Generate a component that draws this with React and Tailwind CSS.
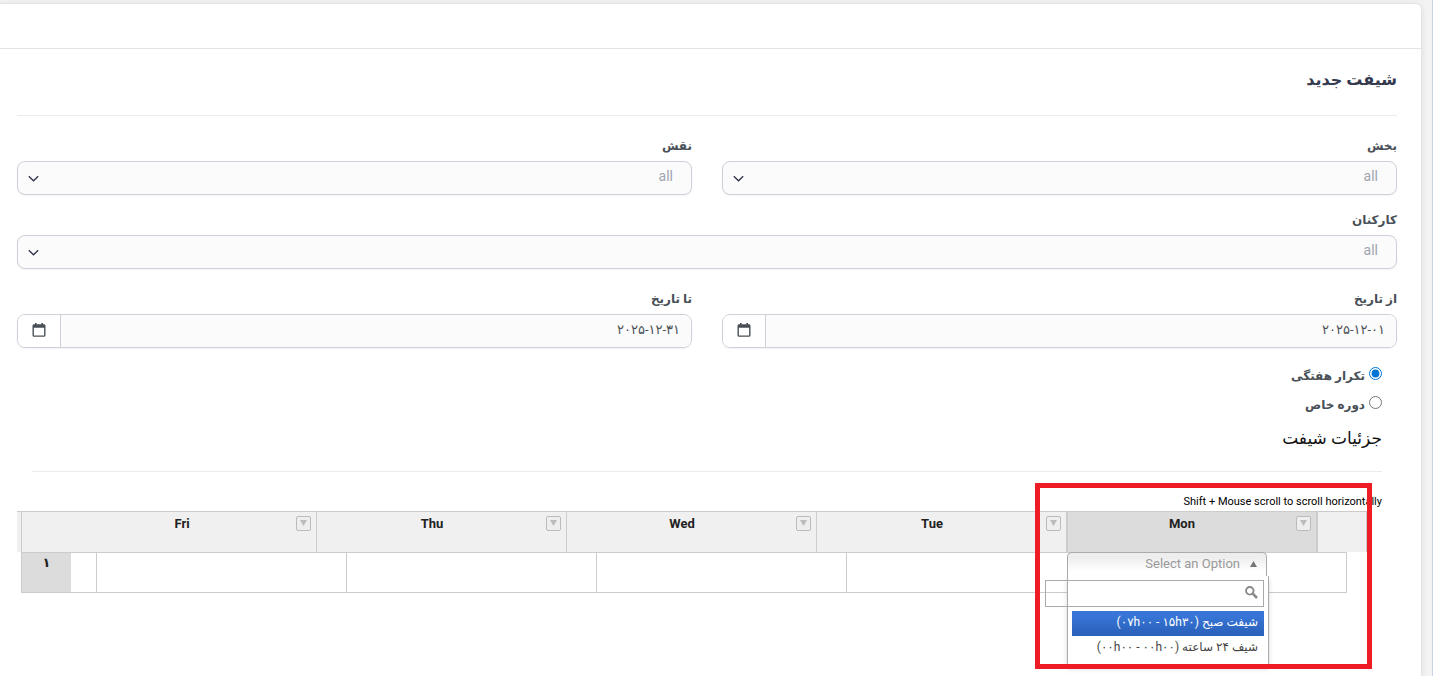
import React from "react";

const columns = [
  { day: "Mon", className: "w-[250px] border-r bg-[#dcdcdc]" },
  { day: "Tue", className: "w-[251px] border-r" },
  { day: "Wed", className: "w-[250px]" },
  { day: "Thu", className: "w-[250px]" },
  { day: "Fri", className: "" },
];

function Label({ htmlFor, children }) {
  return (
    <label htmlFor={htmlFor} className="mb-[6px] block h-5 text-[12px] leading-[22px] font-bold text-[#495057]">
      {children}
    </label>
  );
}

function SelectField({ id, label }) {
  return (
    <div>
      <Label htmlFor={id}>{label}</Label>
      <div className="grid items-center">
        <select
          id={id}
          className="col-start-1 row-start-1 h-[34px] w-full appearance-none rounded-lg border border-[#ced0da] bg-[#fbfbfb] px-[18px] pb-1 text-sm text-[#a0a5b1] shadow-xs"
        >
          <option>all</option>
        </select>
        <svg
          className="pointer-events-none col-start-1 row-start-1 ml-[11px] h-[11px] w-[11px] justify-self-end"
          viewBox="0 0 11 11"
          fill="none"
          stroke="#2f3349"
          strokeWidth="1.3"
          aria-hidden="true"
        >
          <path d="M0.8 3.2L5.5 7.8L10.2 3.2" />
        </svg>
      </div>
    </div>
  );
}

function DateField({ id, label, value }) {
  return (
    <div>
      <Label htmlFor={id}>{label}</Label>
      <div className="flex h-[34px] overflow-hidden rounded-lg border border-[#ced0da] shadow-xs">
        <input
          id={id}
          type="text"
          dir="ltr"
          defaultValue={value}
          className="min-w-0 flex-1 bg-[#fbfbfb] px-[11px] pb-[3px] text-right text-[13px] text-[#495057]"
        />
        <button
          type="button"
          aria-label={label}
          className="flex w-[43px] items-center justify-center border-r border-[#ced0da] bg-white pb-[2px]"
        >
          <svg className="h-[14px] w-[14px]" viewBox="0 0 14 14" fill="#495057" aria-hidden="true">
            <path
              fillRule="evenodd"
              d="M3 0h1.600v1.200h4.800V0H11v1.200h1c.9 0 1.500.6 1.500 1.500v9.600c0 .9-.6 1.500-1.500 1.500H2c-.9 0-1.500-.6-1.500-1.500V2.700c0-.9.6-1.500 1.500-1.500h1zM1.900 4.800v7.600h10.200V4.800z"
            />
          </svg>
        </button>
      </div>
    </div>
  );
}

function RadioRow({ id, label, defaultChecked }) {
  return (
    <div className="flex h-[29px] items-center gap-1">
      <input
        id={id}
        type="radio"
        name="repeat"
        defaultChecked={defaultChecked}
        className="mb-[2px] h-[13px] w-[13px] accent-[#0075d6]"
      />
      <label htmlFor={id} className="mt-[2px] text-[12px] leading-5 font-bold text-[#495057]">
        {label}
      </label>
    </div>
  );
}

function FilterButton() {
  return (
    <button
      type="button"
      aria-label="Column menu"
      className="flex h-[15px] w-[15px] items-start justify-center rounded-xs border border-[#bbb] bg-[#eee] pt-[3px]"
    >
      <svg className="h-[6px] w-[7px]" viewBox="0 0 7 6" fill="#bbb" aria-hidden="true">
        <path d="M0 0h7L3.500 6z" />
      </svg>
    </button>
  );
}

function OptionPicker() {
  return (
    <div className="absolute top-full right-[98px] z-10 w-[202px]" dir="rtl">
      <button
        type="button"
        className="mr-[2px] flex h-6 w-[200px] items-center gap-[10px] rounded-t-[5px] border border-b-0 border-[#aaa] bg-linear-to-b from-[#eee] from-20% to-white to-80% pr-[9px] pb-[2px] text-[13px] text-[#999]"
      >
        <svg className="h-[6px] w-[7px]" viewBox="0 0 7 6" fill="#777" aria-hidden="true">
          <path d="M0 6h7L3.500 0z" />
        </svg>
        Select an Option
      </button>
      <div className="h-[89px] w-[202px] border-x border-[#aaa] bg-white px-1 pt-1 shadow-[0_4px_5px_rgba(0,0,0,0.15)]">
        <div className="grid items-center">
          <input
            type="text"
            aria-label="Search"
            className="col-start-1 row-start-1 h-[27px] w-[219px] border border-[#aaa] bg-transparent pr-5 text-xs"
          />
          <svg
            className="col-start-1 row-start-1 mr-[6px] mb-[2px] h-[13px] w-[13px]"
            viewBox="0 0 13 13"
            fill="none"
            stroke="#888"
            aria-hidden="true"
          >
            <circle cx="4.800" cy="4.800" r="3.800" strokeWidth="1.800" />
            <path d="M7.700 7.700L12 12" strokeWidth="2.500" />
          </svg>
        </div>
        <ul className="mt-1 text-xs">
          <li className="h-[25px] bg-linear-to-b from-[#3875d7] from-20% to-[#2a62bc] to-90% px-[6px] leading-[22px] whitespace-nowrap text-white">
            شیفت صبح <bdi dir="ltr">(۰۷h۰۰ - ۱۵h۳۰)</bdi>
          </li>
          <li className="h-[25px] px-[6px] leading-[22px] whitespace-nowrap text-[#444]">
            شیف ۲۴ ساعته <bdi dir="ltr">(۰۰h۰۰ - ۰۰h۰۰)</bdi>
          </li>
        </ul>
      </div>
    </div>
  );
}

function ScheduleGrid() {
  return (
    <div className="relative mr-[30px]">
      <table className="w-full table-fixed border-separate border-spacing-0 text-[13px] text-[#222]">
        <thead>
          <tr className="h-[41px] bg-[#f0f0f0]">
            <td className="w-[50px] border-x border-t border-[#ccc] p-0" />
            {columns.map(({ day, className }) => (
              <th
                key={day}
                scope="col"
                className={"border-t border-l border-[#ccc] p-0 align-top font-bold " + className}
              >
                <div className="flex items-start pt-1 pr-[5px]">
                  <FilterButton />
                  <span className="w-[228px] leading-[15px]">{day}</span>
                </div>
              </th>
            ))}
            <td className="w-1 border-t border-[#ccc] p-0" />
          </tr>
        </thead>
      </table>
      <div className="mr-5 ml-1">
        <table
          dir="ltr"
          className="w-full table-fixed border-separate border-spacing-0 text-[13px] text-[#222]"
        >
          <tbody>
            <tr className="h-[41px]">
              <th
                scope="row"
                className="w-[50px] border-y border-l border-[#ccc] bg-[#dcdcdc] p-0 align-top leading-5 font-bold"
              >
                ۱
              </th>
              <td className="border-y border-r border-[#ccc]" />
              {columns.map(({ day }) => (
                <td key={day} className="w-[250px] border-y border-r border-[#ccc]" />
              ))}
            </tr>
          </tbody>
        </table>
      </div>
      <div className="absolute top-0 right-0 h-[41px] w-0">
        <OptionPicker />
      </div>
      <div className="pointer-events-none absolute -top-7 -right-[5px] z-20 h-[186px] w-[337px] border-5 border-[#ee1c25]" />
    </div>
  );
}

export default function App() {
  return (
    <div
      dir="rtl"
      className="flex min-h-screen flex-col overflow-hidden border-r border-[#c8d4e3] bg-[#f3f3f3] pt-[3px] pr-[11px] font-['Roboto','DejaVu_Sans',sans-serif]"
    >
      <main className="flex-1 rounded-tr-md border-t border-[#e4e4e8] bg-white shadow-[0_2px_6px_rgba(47,43,61,0.15)]">
        <header className="h-[45px] border-b border-[#e3e4ea]" />
        <form className="pt-4 pr-6 pl-[17px]">
          <h1 className="border-b border-[#ebebed] pb-5 text-[16px] leading-[30px] font-bold text-[#343a4f]">
            شیفت جدید
          </h1>
          <div className="mt-[19px] grid grid-cols-2 gap-x-[30px] gap-y-[14px]">
            <SelectField id="section" label="بخش" />
            <SelectField id="role" label="نقش" />
            <div className="col-span-2">
              <SelectField id="staff" label="کارکنان" />
            </div>
          </div>
          <div className="mt-[19px] grid grid-cols-2 gap-x-[30px]">
            <DateField id="from" label="از تاریخ" value="۲۰۲۵-۱۲-۰۱" />
            <DateField id="to" label="تا تاریخ" value="۲۰۲۵-۱۲-۳۱" />
          </div>
          <div className="mt-3 px-[15px]">
            <RadioRow id="weekly" label="تکرار هفتگی" defaultChecked />
            <RadioRow id="period" label="دوره خاص" />
            <h2 className="border-b border-[#ebebed] pb-[13px] text-[17px] leading-10 text-[#111]">
              جزئیات شیفت
            </h2>
            <p dir="ltr" className="mt-5 text-right text-[11px] leading-[19px] text-black">
              Shift + Mouse scroll to scroll horizontally
            </p>
          </div>
          <ScheduleGrid />
        </form>
      </main>
    </div>
  );
}
